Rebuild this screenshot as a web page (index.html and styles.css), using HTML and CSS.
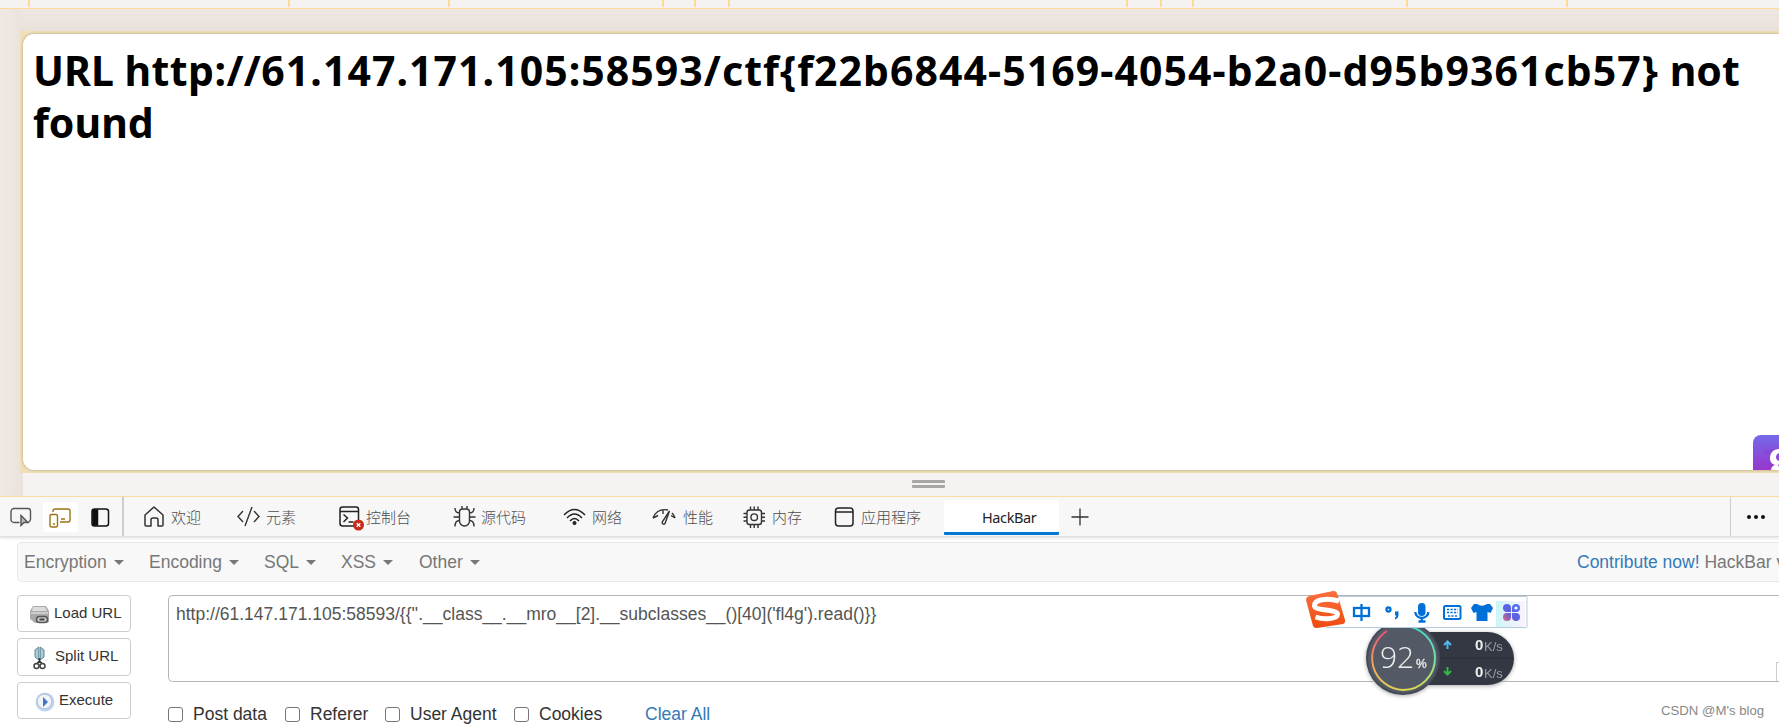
FILE: index.html
```html
<!DOCTYPE html>
<html lang="zh-CN">
<head>
    <meta charset="UTF-8">
    <meta name="viewport" content="width=device-width, initial-scale=1.0">
    <title>404 Not Found</title>
    <link rel="stylesheet" href="styles.css">
</head>
<body>
    <!--标尺-->
    <svg class="ruler" width="1779" height="9" fill="#ffdc96">
        <path d="M28 0h2v7h-2zM288 0h2v7h-2zM448 0h2v7h-2zM662 0h2v7h-2zM694 0h2v7h-2zM728 0h2v7h-2zM1126 0h2v7h-2zM1160 0h2v7h-2zM1192 0h2v7h-2zM1406 0h2v7h-2zM1566 0h2v7h-2z"/>
    </svg>

    <!--设备模拟区-->
    <div class="device">
        <div class="frame">
            <div class="page">
                <h1>URL <span class="scheme">http://</span><span class="path">61.147.171.105:58593/ctf{f22b6844-5169-4054-b2a0-d95b9361cb57}</span> not<br>found</h1>
                <div class="gpt">
                    <svg width="26" height="35" viewBox="0 0 26 35">
                        <text x="11" y="19" class="gpt-text">GPT</text>
                        <text x="2" y="33" class="gpt-text">GPT</text>
                        <path d="M26 14c-6 0-9 4-9 9 0 4 2 6 5 7-3 1-4 3-4 6h8v-4c-1-1-1-2 0-3v-3c-2-1-3-2-3-4s1-3 3-4z" fill="#fff"/>
                    </svg>
                </div>
            </div>
        </div>
        <div class="resizer"><span class="grip"></span></div>
    </div>

    <!--开发者工具标签栏-->
    <div class="tabbar">
        <div class="tool tool-inspect">
            <svg width="22" height="20" viewBox="0 0 22 20" fill="none" stroke="#555" stroke-width="1.4"><path d="M9.500 15.500H4a3 3 0 0 1-3-3V4.500a3 3 0 0 1 3-3h14a2.500 2.500 0 0 1 2.500 2.500v8a3 3 0 0 1-2 3"/><path d="M11 8.500v10l3-3h4z" fill="#bbb"/></svg>
        </div>
        <div class="tool tool-device">
            <svg width="22" height="20" viewBox="0 0 22 20" fill="none" stroke="#9a7412" stroke-width="1.4"><path d="M4 4V3a2 2 0 0 1 2-2h13a2 2 0 0 1 2 2v9a2 2 0 0 1-2 2h-8M12 11h4"/><rect x="1" y="6.500" width="7.500" height="12.500" rx="1.500"/><path d="M4 16h2"/></svg>
        </div>
        <div class="tool tool-panel">
            <svg width="19" height="19" viewBox="0 0 19 19" fill="none" stroke="#111" stroke-width="1.5"><rect x="1" y="1" width="16.500" height="17" rx="2.500"/><path d="M2 2h4.500v15H2z" fill="#111"/></svg>
        </div>
        <div class="tab tab-welcome">
            <svg width="20" height="21" viewBox="0 0 20 21" fill="none" stroke="#333" stroke-width="1.5" stroke-linejoin="round"><path d="M1 9l9-8 9 8v10a1 1 0 0 1-1 1h-4v-6a2 2 0 0 0-2-2H9a2 2 0 0 0-2 2v6H2a1 1 0 0 1-1-1z"/></svg>
            <span>欢迎</span>
        </div>
        <div class="tab tab-elements">
            <svg width="23" height="21" viewBox="0 0 23 21" fill="none" stroke="#333" stroke-width="1.4"><path d="M6 5L1 10.500 6 16M17 5l5 5.500-5 5.500M15 1L8 20"/></svg>
            <span>元素</span>
        </div>
        <div class="tab tab-console">
            <svg width="26" height="25" viewBox="0 0 26 25" fill="none" stroke="#222" stroke-width="1.5"><rect x="1" y="1" width="18.500" height="19" rx="2.500"/><path d="M1 5.500h18.500M4.500 8.500l4 3.500-4 4M9.500 16h5"/><circle cx="19.500" cy="19" r="5.500" fill="#c42b1c" stroke="none"/><path d="M17.700 17.200l3.600 3.600M21.300 17.200l-3.600 3.600" stroke="#fff" stroke-width="1.300"/></svg>
            <span>控制台</span>
        </div>
        <div class="tab tab-sources">
            <svg width="23" height="23" viewBox="0 0 23 23" fill="none" stroke="#333" stroke-width="1.4"><path d="M6.500 7a3 3 0 0 1 3-3h4a3 3 0 0 1 3 3v9a5 5 0 0 1-10 0zM9 4V1M14 4V1M6.500 8Q2 8 2 3M16.500 8Q21 8 21 3M6.500 12H.5M16.500 12h6M6.500 15.500Q2 15.500 2 21.500M16.500 15.500Q21 15.500 21 21.500"/></svg>
            <span>源代码</span>
        </div>
        <div class="tab tab-network">
            <svg width="23" height="18" viewBox="0 0 23 18" fill="none" stroke="#222" stroke-width="1.5"><path d="M1 7q10.500-11 21 0M4 10q7.500-8 15 0M7 13q4.500-5 9 0"/><circle cx="11.500" cy="15" r="2" fill="#222" stroke="none"/></svg>
            <span>网络</span>
        </div>
        <div class="tab tab-performance">
            <svg width="24" height="18" viewBox="0 0 24 18" fill="none" stroke="#333" stroke-width="1.4"><path d="M1 10Q5 0 16 2M20 5q2 2 3 5M1 10l5-2.500M23 10l-4-2.500M11 2V6M17.500 3l-7 10.500c-1 2 1 3.500 2.500 2z"/></svg>
            <span>性能</span>
        </div>
        <div class="tab tab-memory">
            <svg width="22" height="22" viewBox="0 0 22 22" fill="none" stroke="#333" stroke-width="1.4"><rect x="4" y="4" width="14.500" height="14.500" rx="2.500"/><circle cx="11.200" cy="11.200" r="3.300"/><path d="M7.500 4V.5M11.200 4V.5M15 4V.5M7.500 18.500V22M11.200 18.500V22M15 18.500V22M4 7.500H.5M4 11.200H.5M4 15H.5M18.500 7.500H22M18.500 11.200H22M18.500 15H22"/></svg>
            <span>内存</span>
        </div>
        <div class="tab tab-application">
            <svg width="20" height="20" viewBox="0 0 20 20" fill="none" stroke="#222" stroke-width="1.5"><rect x="1.500" y="1" width="17.500" height="18" rx="3"/><path d="M1.500 5h17.500"/></svg>
            <span>应用程序</span>
        </div>
        <div class="tab-active">HackBar</div>
        <svg class="plus" width="18" height="18" viewBox="0 0 18 18" stroke="#333" stroke-width="1.3"><path d="M9 .5v17M.5 9h17"/></svg>
        <div class="more"><i></i><i></i><i></i></div>
    </div>

    <!--HackBar-->
    <div class="hackbar">
        <div class="navbar">
            <span class="menu menu-encryption">Encryption<b class="caret"></b></span>
            <span class="menu menu-encoding">Encoding<b class="caret"></b></span>
            <span class="menu menu-sql">SQL<b class="caret"></b></span>
            <span class="menu menu-xss">XSS<b class="caret"></b></span>
            <span class="menu menu-other">Other<b class="caret"></b></span>
            <span class="contribute"><a href="javascript:void(0);">Contribute now!</a> HackBar v</span>
        </div>
        <div class="content">
            <div class="buttons">
                <div class="btn">
                    <svg width="21" height="18" viewBox="0 0 21 18"><path d="M4 0h13l3 5v10q0 2-2 2H6L1 13V5z" fill="#aaa"/><path d="M4 1h12l2 4H3z" fill="#ddd"/><path d="M2 6h17v2H2z" fill="#ccc"/><rect x="7.500" y="10.500" width="11" height="6" rx="3" fill="#ccc" stroke="#555" stroke-width="1.500"/><path d="M10.500 13.500h5" stroke="#444" stroke-width="2"/></svg>
                    <span>Load URL</span>
                </div>
                <div class="btn btn-split">
                    <svg width="13" height="24" viewBox="0 0 13 24"><path d="M5.800 1v13L2 11V4zM7.200 1v13l3.800-3V4z" fill="#a9ccd9" stroke="#628391" stroke-width="1"/><path d="M6.500 12v4M6.500 15l-3 3M6.500 15l3 3" stroke="#333" stroke-width="1.500"/><circle cx="3.500" cy="20" r="2.500" fill="none" stroke="#444" stroke-width="1.500"/><circle cx="9.500" cy="20" r="2.500" fill="none" stroke="#444" stroke-width="1.500"/></svg>
                    <span>Split URL</span>
                </div>
                <div class="btn btn-execute">
                    <svg width="20" height="20" viewBox="0 0 20 20"><circle cx="10" cy="10" r="9.500" fill="#bcd5f5"/><circle cx="9.500" cy="9.500" r="7.300" fill="#f2f4f8" stroke="#b4bdcd"/><path d="M8 5l5 5-5 5z" fill="#3c78c3"/></svg>
                    <span>Execute</span>
                </div>
            </div>
            <div class="main">
                <div class="url-box">http://61.147.171.105:58593/{{''.__class__.__mro__[2].__subclasses__()[40]('fl4g').read()}}<span class="scroll-corner"></span></div>
                <div class="options">
                    <label class="opt-post"><i class="box"></i>Post data</label>
                    <label class="opt-referer"><i class="box"></i>Referer</label>
                    <label class="opt-agent"><i class="box"></i>User Agent</label>
                    <label class="opt-cookies"><i class="box"></i>Cookies</label>
                    <a href="javascript:void(0);">Clear All</a>
                </div>
            </div>
        </div>
    </div>

    <!--网速悬浮球-->
    <svg class="speed" width="160" height="84" viewBox="0 0 160 84">
        <defs>
            <linearGradient id="arc-left" x1="0" y1="0" x2="0" y2="1"><stop offset="0" stop-color="#f0507d"/><stop offset=".5" stop-color="#f09a5c"/><stop offset="1" stop-color="#e2d452"/></linearGradient>
            <linearGradient id="arc-right" x1="0" y1="0" x2="0" y2="1"><stop offset="0" stop-color="#46d8d0"/><stop offset=".5" stop-color="#70dea0"/><stop offset="1" stop-color="#dedb52"/></linearGradient>
        </defs>
        <rect x="36" y="12" width="118" height="53" rx="26.500" fill="#343842"/>
        <path d="M70 38h83" stroke="#2a2d35"/>
        <circle cx="43" cy="38" r="37" fill="#464b58"/>
        <circle cx="43" cy="38" r="35" fill="#545966"/>
        <g fill="none" stroke-width="2">
            <path d="M43 6a32 32 0 0 1 0 64" stroke="url(#arc-right)"/>
            <path d="M43 70a32 32 0 0 1-16-59" stroke="url(#arc-left)"/>
        </g>
        <text x="20" y="48" class="percent">92</text>
        <text x="56" y="48" class="percent-sign">%</text>
        <path d="M87.500 29v-7M84 25l3.500-3.500L91 25" fill="none" stroke="#4fb8ee" stroke-width="2"/>
        <path d="M87.500 47v7M84 51l3.500 3.500L91 51" fill="none" stroke="#35b648" stroke-width="2"/>
        <text x="115" y="30" class="rate">0</text><text x="124" y="31" class="unit">K/s</text>
        <text x="115" y="57" class="rate">0</text><text x="124" y="58" class="unit">K/s</text>
    </svg>

    <!--输入法工具条-->
    <div class="ime">
        <svg width="222" height="40" viewBox="0 0 222 40">
            <defs>
                <linearGradient id="flower" x1="0" y1="1" x2="1" y2="0"><stop offset="0" stop-color="#e06a78"/><stop offset=".4" stop-color="#6260dc"/><stop offset="1" stop-color="#4b73ff"/></linearGradient>
                <linearGradient id="glow"><stop offset="0" stop-color="#ccf5f7"/><stop offset="1" stop-color="#fdf2fd"/></linearGradient>
                <linearGradient id="sogou" x1="0" y1="0" x2="0" y2="1"><stop offset="0" stop-color="#f9703e"/><stop offset="1" stop-color="#f04a10"/></linearGradient>
            </defs>
            <rect x="20" y="6.500" width="201" height="31" rx="1" fill="#fff" stroke="#b5cbe0"/>
            <rect x="190" y="11" width="29" height="26" fill="url(#glow)"/>
            <path d="M3 6L27 1q3-.5 4 2l8 27q.5 3-2 4L11 38q-3 .5-4-2L0 10q0-3 3-4z" fill="url(#sogou)"/>
            <path d="M33 11C20 7 8 10 8.500 16c1 5 22 3 23 8 0 5-13 6-22 3" fill="none" stroke="#fff" stroke-width="5"/>
            <g fill="none" stroke="#0070d9" stroke-width="2.300">
                <rect x="48" y="18" width="15" height="8"/><path d="M55.500 14v17"/>
                <circle cx="82.500" cy="19.500" r="2"/>
                <path d="M109.300 22a6.500 6 0 0 0 13 0M115.800 28v4M112.500 31.500h7"/>
                <rect x="138" y="16" width="16.500" height="13" rx="1.500" stroke-width="2"/>
                <path d="M141 19.500h11M141 22.500h11M142 26h9" stroke-width="1.500" stroke-dasharray="2.200 1.300"/>
            </g>
            <path d="M89 21.500h3.500v3q0 4-3.500 5v-2q1-.5 1.500-2H89z" fill="#0070d9"/>
            <rect x="112" y="13" width="7.500" height="13" rx="3.700" fill="#0070d9"/>
            <path d="M171 14q5 3.500 10 0h3l3 4-2.500 5-3-1v9h-11v-9l-3 1-2.500-5 3-4z" fill="#0070d9"/>
            <path d="M201 14a4 4 0 1 0 0 8h4v-4a4 4 0 0 0-4-4zM210 14a4 4 0 1 1 0 8h-4v-4a4 4 0 0 1 4-4zM201 31a4 4 0 1 1 0-8h4v4a4 4 0 0 1-4 4zM210 31a4 4 0 1 0 0-8h-4v4a4 4 0 0 0 4 4z" fill="url(#flower)"/>
            <circle cx="210" cy="18" r="1.600" fill="#fff"/>
        </svg>
    </div>
    <div class="watermark">CSDN @M's blog</div>
</body>
</html>
```
FILE: styles.css
```css
* {
    box-sizing: border-box;
}

body {
    position: relative;
    margin: 0px;
    width: 1779px;
    height: 728px;
    overflow: hidden;
    background: #ffffff;
    color: #333333;
    font-family: "Liberation Sans", Arial, "Noto Sans CJK SC", sans-serif;
    font-size: 17.5px;
}

a {
    color: #337ab7;
    text-decoration: none;
}

svg {
    display: block;
    flex: none;
}

.ruler {
    height: 9px;
    background: #f7f2f2;
    border-bottom: 1px solid #ffdc96;
}

.device {
    height: 488px;
    padding: 22px 0px 0px 20px;
    background: linear-gradient(#efe7e2, #e9e2da) 20px 0px / 100% 22px no-repeat, linear-gradient(to right, #f0e8e4, #ebe4dd 20px);
    border-bottom: 1px solid #ffdc96;
}

.frame {
    height: 442px;
    padding: 3px 0px 3px 3px;
    background: #f0dfb8;
}

.page {
    position: relative;
    height: 436px;
    padding: 10px;
    overflow: hidden;
    background: #ffffff;
    border-radius: 11px 0px 0px 11px;
    box-shadow: 0px 0px 3px #a89c7c;
}

h1 {
    margin: 0px;
    color: #000000;
    font-family: "Noto Sans", "Open Sans", sans-serif;
    font-size: 41px;
    line-height: 52px;
    font-weight: bold;
    white-space: nowrap;
}

.scheme {
    letter-spacing: 0.45px;
}

.path {
    letter-spacing: 1.06px;
}

.gpt {
    position: absolute;
    right: 0px;
    bottom: 0px;
    width: 26px;
    height: 35px;
    background: linear-gradient(#726ae8, #9c35cf);
    border-radius: 8px 0px 0px 0px;
}

.gpt-text {
    fill: #8246cc;
    font-size: 7px;
    font-weight: bold;
}

.resizer {
    display: flex;
    justify-content: center;
    height: 23px;
    margin-left: 3px;
    padding-top: 7px;
    background: #f7f2f2;
}

.grip {
    width: 33px;
    height: 8px;
    margin-left: 55px;
    border-top: 3px solid #a9a6a6;
    border-bottom: 3px solid #a9a6a6;
    border-radius: 1px;
}

/*标签栏*/
.tabbar {
    display: flex;
    align-items: center;
    height: 40px;
    background: #f7f7f7;
    border-bottom: 1px solid #e0e0e0;
    box-shadow: 0px 1px 3px #dddddd;
    color: #4c4c4c;
    font-family: "Noto Sans CJK SC", sans-serif;
    font-size: 15px;
    font-weight: 300;
}

.tool {
    display: flex;
    align-items: center;
    justify-content: center;
    height: 30px;
    padding-top: 1px;
}

.tool-inspect {
    width: 43px;
    padding-right: 2px;
}

.tool-device {
    width: 35px;
    padding-right: 1px;
    margin-top: 1px;
    background: #ffffff;
    border-radius: 3px;
}

.tool-panel {
    width: 46px;
    height: 39px;
    padding-top: 2px;
    border-right: 2px solid #cacdd1;
}

.tab {
    display: flex;
    align-items: center;
    gap: 7px;
    height: 39px;
    white-space: nowrap;
}

.tab-welcome {
    width: 93px;
    margin-left: 20px;
}

.tab-elements {
    width: 102px;
    gap: 6px;
}

.tab-console {
    width: 114px;
    gap: 1px;
}

.tab-console svg {
    margin-top: 4px;
}

.tab-sources {
    width: 110px;
    gap: 5px;
}

.tab-network {
    width: 89px;
    gap: 6px;
}

.tab-performance {
    width: 91px;
    gap: 7px;
}

.tab-memory {
    width: 91px;
}

.tab-application {
    width: 110px;
    gap: 7px;
}

.tab-active {
    width: 115px;
    height: 35px;
    margin-top: 2px;
    padding-left: 38px;
    background: #ffffff;
    border-bottom: 3px solid #0078d4;
    border-radius: 3px 3px 1px 1px;
    color: #222222;
    font-family: "Noto Sans", sans-serif;
    font-size: 14.5px;
    font-weight: 400;
    letter-spacing: -0.4px;
    line-height: 35px;
}

.plus {
    margin-top: 1px;
    margin-left: 12px;
}

.more {
    display: flex;
    align-items: center;
    gap: 3px;
    width: 49px;
    height: 39px;
    margin-left: auto;
    padding-top: 1px;
    padding-left: 16px;
    border-left: 1px solid #cacdd1;
}

.more i {
    width: 4px;
    height: 4px;
    border-radius: 2px;
    background: #111111;
}

/*HackBar*/
.hackbar {
    padding: 5px 0px 0px 17px;
}

.navbar {
    display: flex;
    align-items: center;
    height: 40px;
    padding-left: 6px;
    background: #f8f8f8;
    border: 1px solid #e7e7e7;
    border-right: none;
    border-radius: 5px 0px 0px 5px;
    color: #777777;
    white-space: nowrap;
}

.menu {
    display: flex;
    align-items: center;
}

.menu-encryption {
    width: 125px;
}

.menu-encoding {
    width: 115px;
}

.menu-sql {
    width: 77px;
}

.menu-xss {
    width: 78px;
}

.caret {
    margin-left: 7px;
    border: 5px solid transparent;
    border-top-color: #777777;
    border-bottom: none;
}

.contribute {
    width: 202px;
    margin-left: auto;
}

.content {
    display: flex;
    gap: 37px;
    padding-top: 13px;
}

.buttons {
    display: flex;
    flex-direction: column;
    gap: 6px;
    width: 114px;
}

.btn {
    display: flex;
    align-items: center;
    gap: 4px;
    height: 37px;
    padding: 0px 0px 2px 11px;
    border: 1px solid #cccccc;
    border-radius: 4px;
    font-size: 15px;
    white-space: nowrap;
}

.btn svg {
    margin-top: 4px;
}

.btn-split {
    height: 38px;
    padding-left: 15px;
    padding-bottom: 3px;
    gap: 9px;
}

.btn-execute {
    padding-left: 17px;
    gap: 4px;
}

.main {
    flex: 1;
}

.url-box {
    position: relative;
    height: 87px;
    padding: 8px 7px;
    border: 1px solid #b5b5b5;
    border-right: none;
    border-radius: 5px 0px 0px 5px;
    color: #555555;
    line-height: 21px;
    white-space: nowrap;
}

.scroll-corner {
    position: absolute;
    right: 0px;
    bottom: 0px;
    width: 3px;
    height: 19px;
    border-top: 1px solid #cccccc;
    border-left: 1px solid #cccccc;
}

.options {
    display: flex;
    align-items: center;
    height: 24px;
    margin-top: 20px;
    white-space: nowrap;
}

.options label {
    display: flex;
    align-items: center;
    gap: 10px;
}

.box {
    width: 15px;
    height: 15px;
    border: 1px solid #767676;
    border-radius: 3px;
}

.opt-post {
    width: 117px;
}

.opt-referer {
    width: 100px;
}

.opt-agent {
    width: 129px;
}

.opt-cookies {
    width: 131px;
}

/*悬浮层*/
.speed {
    position: absolute;
    left: 1360px;
    top: 620px;
    filter: drop-shadow(0px 1px 2px #aaaaaa);
}

.percent {
    fill: #eeeeee;
    font-family: "Open Sans", sans-serif;
    font-size: 30px;
    font-weight: 300;
}

.percent-sign {
    fill: #eeeeee;
    stroke: #eeeeee;
    stroke-width: 0.3px;
    font-size: 12px;
}

.rate {
    fill: #eeeeee;
    font-size: 15px;
    font-weight: bold;
}

.unit {
    fill: #999da5;
    font-size: 13px;
}

.ime {
    position: absolute;
    left: 1306px;
    top: 590px;
}

.watermark {
    position: absolute;
    left: 1661px;
    top: 703px;
    color: #888888;
    font-family: "Liberation Sans", Arial, sans-serif;
    font-size: 13.2px;
    line-height: 16px;
    white-space: nowrap;
}
```
